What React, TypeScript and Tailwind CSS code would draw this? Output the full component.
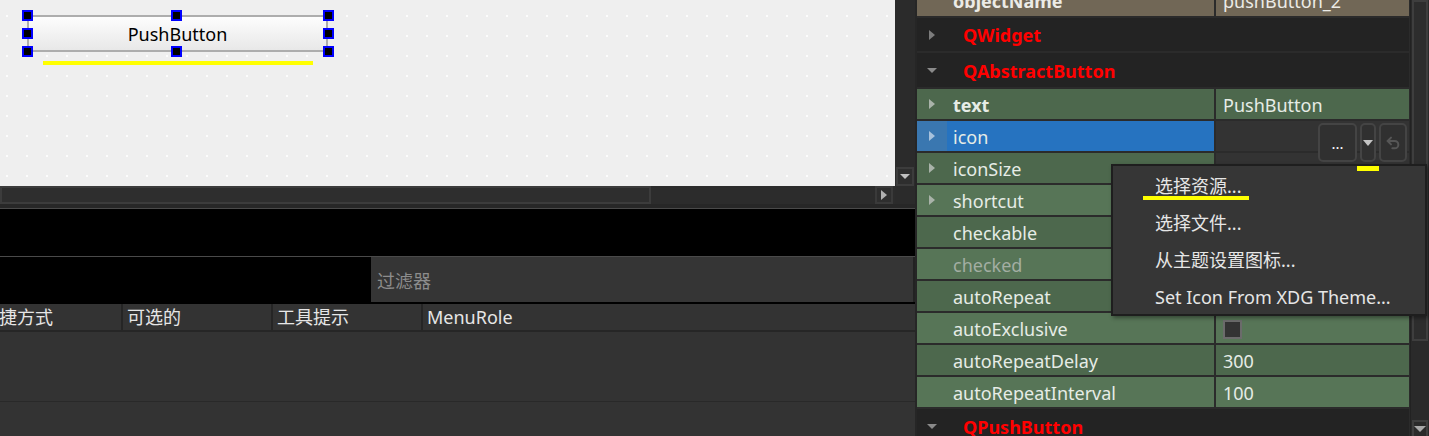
import { Undo2 } from "lucide-react"

const RightTri = ({ color = "#a9b3a9" }: { color?: string }) => (
  <svg width="6" height="10" viewBox="0 0 6 10">
    <path d="M0 0L6 5L0 10Z" fill={color} />
  </svg>
)

const DownTri = ({ color = "#8a8a8a", w = 10, h = 5 }: { color?: string; w?: number; h?: number }) => (
  <svg width={w} height={h} viewBox={`0 0 ${w} ${h}`}>
    <path d={`M0 0H${w}L${w / 2} ${h}Z`} fill={color} />
  </svg>
)

type Prop = {
  name: string
  value?: string
  tone: "dark" | "light"
  arrow?: boolean
  bold?: boolean
  disabled?: boolean
  checkbox?: boolean
  selected?: boolean
  editor?: boolean
}

const props: Prop[] = [
  { name: "text", value: "PushButton", tone: "dark", arrow: true, bold: true },
  { name: "icon", tone: "light", arrow: true, selected: true },
  { name: "iconSize", tone: "dark", arrow: true, editor: true },
  { name: "shortcut", tone: "light", arrow: true },
  { name: "checkable", tone: "dark" },
  { name: "checked", tone: "light", disabled: true },
  { name: "autoRepeat", tone: "dark" },
  { name: "autoExclusive", tone: "light", checkbox: true },
  { name: "autoRepeatDelay", value: "300", tone: "dark" },
  { name: "autoRepeatInterval", value: "100", tone: "light" },
]

const handles = [
  [22, 10], [171, 10], [323, 10],
  [22, 28], [323, 28],
  [22, 46], [171, 46], [323, 46],
]

const menuItems = ["选择资源...", "选择文件...", "从主题设置图标...", "Set Icon From XDG Theme..."]

function SectionRow({ label, open, h }: { label: string; open?: boolean; h: string }) {
  return (
    <div className={`flex items-center bg-[#232323] ${h}`}>
      <div className="w-[30px] flex justify-center">
        {open ? <DownTri color="#8a8a8a" /> : <RightTri color="#7c7c7c" />}
      </div>
      <span className="pl-[16px] pt-[1px] font-bold text-[#ff0000]">{label}</span>
    </div>
  )
}

export default function App() {
  return (
    <div className="relative flex w-[1429px] h-[436px] overflow-hidden bg-[#262626] text-[18px] leading-none font-['Noto_Sans','Noto_Sans_CJK_SC',sans-serif]">
      {/* Left: form canvas + action editor */}
      <div className="w-[915px] flex flex-col">
        <div className="flex h-[186px]">
          <div className="relative w-[895px] bg-[#efefef] bg-[radial-gradient(circle,#fcfcfc_1.1px,transparent_1.4px)] bg-[length:20px_20px] bg-[position:-3px_6px]">
            <div className="ml-[27px] mt-[15px] w-[301px] h-[37px] border-2 border-[#adadad] bg-gradient-to-b from-[#fdfdfd] to-[#e8e8e8] flex items-center justify-center text-black">
              PushButton
            </div>
            {handles.map(([x, y]) => (
              <div
                key={`${x}-${y}`}
                className="absolute w-[11px] h-[11px] bg-black border-2 border-[#0000ff]"
                style={{ left: x, top: y }}
              />
            ))}
            <div className="absolute left-[43px] top-[61px] w-[270px] h-[4px] bg-[#ffff00]" />
          </div>
          <div className="w-[20px] bg-[#2b2b2b] flex flex-col justify-end">
            <div className="h-[19px] mx-[1px] border-2 border-[#3c3c3c] bg-[#2e2e2e] flex items-center justify-center">
              <DownTri color="#c0c0c0" w={10} h={5} />
            </div>
          </div>
        </div>
        <div className="flex h-[18px] bg-[#2c2c2c]">
          <div className="w-[651px] border-2 border-[#3c3c3c] bg-[#2e2e2e]" />
          <div className="flex-1" />
          <div className="w-[18px] mr-[2px] border-2 border-[#3a3a3a] bg-[#2e2e2e] flex items-center justify-center">
            <RightTri color="#b0b0b0" />
          </div>
          <div className="w-[20px] bg-[#2b2b2b]" />
        </div>
        <div className="h-[4px] bg-[#272727]" />
        <div className="h-[1px] bg-[#4a4a4a]" />
        <div className="h-[47px] bg-black" />
        <div className="h-[1px] bg-[#4a4a4a]" />
        <div className="flex h-[45px]">
          <div className="w-[371px] bg-black" />
          <div className="flex-1 flex items-center pl-[6px] pt-[2px] bg-[#353535] border-r-2 border-[#222] text-[#8c8c8c]">过滤器</div>
        </div>
        <div className="h-[2px] bg-black" />
        <div className="flex h-[26px] bg-[#333] text-[#e6e6e6]">
          <div className="w-[121px] overflow-hidden flex items-center whitespace-nowrap">
            <span className="ml-[-19px]">快捷方式</span>
          </div>
          <div className="w-[2px] bg-[#252525]" />
          <div className="w-[148px] flex items-center pl-[4px]">可选的</div>
          <div className="w-[2px] bg-[#252525]" />
          <div className="w-[148px] flex items-center pl-[4px]">工具提示</div>
          <div className="w-[2px] bg-[#252525]" />
          <div className="flex-1 flex items-center pl-[4px]">MenuRole</div>
        </div>
        <div className="h-[2px] bg-[#262626]" />
        <div className="flex-1 bg-[#333]">
          <div className="h-[70px] border-b border-[#292929]" />
        </div>
      </div>

      {/* Right: property editor */}
      <div className="ml-[2px] w-[493px] bg-[#2b2b2b]">
        <div className="w-[492px] mt-[-14px] flex flex-col gap-[2px]">
          <div className="flex h-[30px] gap-[2px] text-[#ecebe6]">
            <div className="w-[297px] bg-[#716756] flex items-center pl-[36px] font-bold">objectName</div>
            <div className="flex-1 bg-[#716756] flex items-center pl-[7px]">pushButton_2</div>
          </div>
          <SectionRow label="QWidget" h="h-[33px]" />
          <SectionRow label="QAbstractButton" open h="h-[34px]" />
          {props.map((p) => {
            const bg = p.tone === "dark" ? "bg-[#4d684d]" : "bg-[#577557]"
            return (
              <div key={p.name} className="flex h-[30px] gap-[2px]">
                <div className={`w-[297px] flex items-center ${p.selected ? "bg-[#2673c0]" : bg}`}>
                  <div className={`w-[30px] h-full flex items-center justify-center ${p.selected ? "bg-[#3a77b0]" : ""}`}>
                    {p.arrow && <RightTri color={p.selected ? "#a8c2dc" : "#a9b3a9"} />}
                  </div>
                  <span
                    className={`pl-[6px] pt-[2px] ${p.bold ? "font-bold" : ""} ${p.disabled ? "text-[#a3aea3]" : "text-[#e6ece6]"}`}
                  >
                    {p.name}
                  </span>
                </div>
                <div
                  className={`relative flex-1 flex items-center pl-[7px] pt-[2px] text-[#e6ece6] ${
                    p.selected || p.editor ? "bg-[#333]" : bg
                  }`}
                >
                  {p.value}
                  {p.checkbox && <div className="w-[19px] h-[19px] border-2 border-[#6b6b6b] bg-[#333]" />}
                  {p.selected && (
                    <div className="absolute right-[2px] top-[2px] flex gap-[3px] z-10">
                      <div className="w-[39px] h-[39px] rounded-[5px] border-2 border-[#444] bg-[#303030] flex items-end justify-center pb-[9px] text-[15px] text-white">
                        ...
                      </div>
                      <div className="w-[16px] h-[39px] rounded-[5px] border-2 border-[#444] bg-[#303030] flex items-center justify-center">
                        <DownTri color="#c4c4c4" w={10} h={6} />
                      </div>
                      <div className="w-[28px] h-[39px] rounded-[5px] border-2 border-[#444] bg-[#303030] flex items-center justify-center">
                        <Undo2 size={16} strokeWidth={3} color="#565656" />
                      </div>
                    </div>
                  )}
                </div>
              </div>
            )
          })}
          <SectionRow label="QPushButton" open h="h-[34px]" />
        </div>
      </div>

      {/* Right scrollbar */}
      <div className="w-[19px] bg-[#2a2a2a] border-l border-[#222] flex flex-col">
        <div className="h-[341px] mx-[1px] border-2 border-[#3e3e3e] bg-[#2d2d2d]" />
        <div className="flex-1" />
        <div className="h-[16px] mx-[1px] border-2 border-b-0 border-[#3e3e3e] flex items-center justify-center">
          <DownTri color="#a8a8a8" w={12} h={6} />
        </div>
      </div>

      {/* Context menu */}
      <div className="absolute left-[1111px] top-[164px] w-[316px] h-[152px] bg-[#363636] border-2 border-[#1e1e1e] shadow-[2px_2px_4px_rgba(0,0,0,0.4)] z-20">
        {menuItems.map((m) => (
          <div key={m} className="h-[37px] flex items-center pl-[42px] pt-[2px] text-[#e6e6e6] whitespace-nowrap">
            {m}
          </div>
        ))}
        <div className="absolute left-[30px] top-[30px] w-[106px] h-[4px] bg-[#ffff00]" />
      </div>
      <div className="absolute left-[1357px] top-[166px] w-[22px] h-[5px] bg-[#ffff00] z-30" />
    </div>
  )
}
